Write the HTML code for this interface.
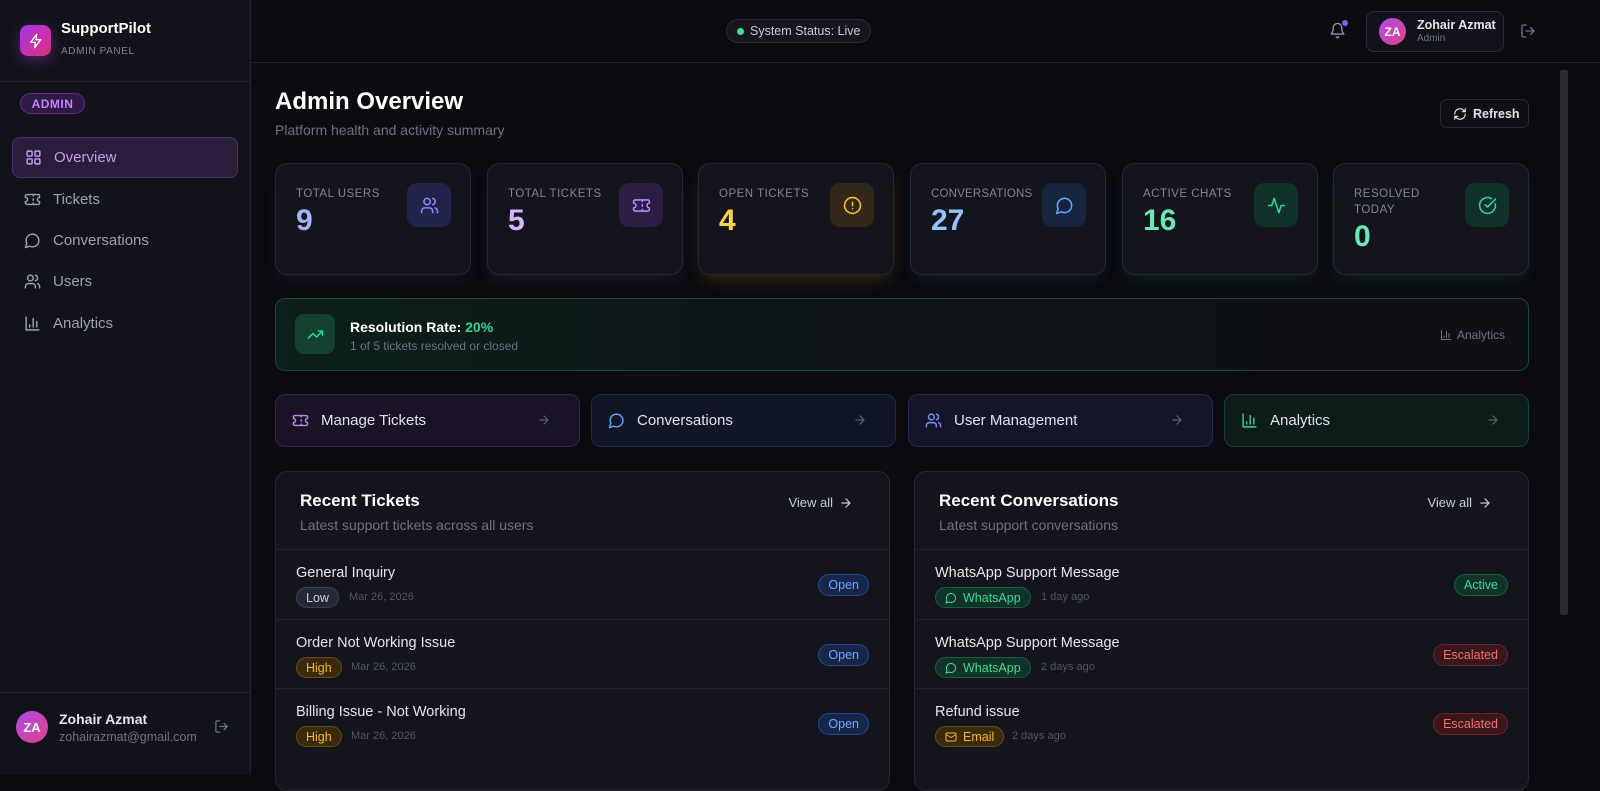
<!DOCTYPE html>
<html><head><meta charset="utf-8"><style>
*{box-sizing:border-box;margin:0;padding:0}
html,body{background:#0b0b10}
body{width:1600px;height:775px;overflow:hidden;font-family:"Liberation Sans",sans-serif;color:#e5e7eb;position:relative}
.sb{position:absolute;left:0;top:0;width:251px;height:775px;background:#12131a;border-right:1px solid #23242e}
.abs{position:absolute}
svg{fill:none;stroke:currentColor;stroke-width:2;stroke-linecap:round;stroke-linejoin:round}
.nav{position:absolute;left:12px;width:226px;height:41px;display:flex;align-items:center;padding-left:12px;font-size:15px;color:#9aa3b5}
.nav svg{width:17px;height:17px;margin-right:12px}
.card{position:absolute;top:163px;width:196px;height:112px;background:#13141c;border:1px solid #262733;border-radius:12px}
.card .l{position:absolute;left:20px;top:22px;font-size:11.5px;letter-spacing:.5px;color:#7d8597;line-height:16px;width:105px}
.card .n{position:absolute;left:20px;top:40px;font-size:30px;font-weight:bold}
.card .ic{position:absolute;left:131px;top:19px;width:44px;height:44px;border-radius:10px;display:flex;align-items:center;justify-content:center}
.card .ic svg{width:19px;height:19px}
.ql{position:absolute;top:394px;width:305px;height:53px;border-radius:10px;display:flex;align-items:center;padding-left:16px;font-size:15px;color:#e0e3ea}
.ql svg{width:17px;height:17px;margin-right:12px}
.ql .ar{position:absolute;right:16px;top:18px;width:14px;height:14px;color:#5b6274}
.pn{position:absolute;top:471px;width:615px;height:320px;background:#13141c;border:1px solid #262733;border-radius:12px;overflow:hidden}
.pn h3{position:absolute;left:24px;top:19px;font-size:17px;color:#fff}
.pn .sub{position:absolute;left:24px;top:45px;font-size:14px;color:#6b7385}
.pn .va{position:absolute;right:36px;top:23px;font-size:13px;color:#c8ccd6;display:flex;align-items:center}
.pn .va svg{width:14px;height:14px;margin-left:6px}
.row{position:absolute;left:0;right:0;height:70px;border-top:1px solid #22232d}
.row .t{position:absolute;left:20px;top:15px;font-size:14.5px;color:#e5e7eb}
.row .b{position:absolute;left:20px;top:37px;height:21px;border-radius:11px;font-size:12.5px;display:flex;align-items:center;padding:0 9px}
.row .d{position:absolute;top:41px;font-size:11px;color:#4f5668}
.row .s{position:absolute;right:20px;top:24px;height:22px;border-radius:11px;font-size:12.5px;padding:0 9px;display:flex;align-items:center}
.open{background:#15264a;border:1px solid #244a8a;color:#6ea8ff}
.low{background:#232836;border:1px solid #3a4152;color:#c9ced8}
.high{background:#3a2a0c;border:1px solid #6a4a10;color:#f5b82a}
.wa{background:#0f3328;border:1px solid #1b5a45;color:#3ddc97}
.em{background:#3a2a0c;border:1px solid #6a4a10;color:#f5b82a}
.act{background:#0f3328;border:1px solid #1b5a45;color:#3ddc97}
.esc{background:#3a1519;border:1px solid #6a252c;color:#f07178}
.b svg{width:12px;height:12px;margin-right:6px}
</style></head><body>
<div class="sb">
 <div class="abs" style="left:20px;top:25px;width:31px;height:31px;border-radius:8px;background:linear-gradient(135deg,#a534e8,#e0307a);box-shadow:0 4px 14px rgba(170,50,220,.4);display:flex;align-items:center;justify-content:center;color:#fff"><svg width="16" height="16" viewBox="0 0 24 24"><path d="M13 2 4 14h7l-1 8 9-12h-7z"/></svg></div>
 <div class="abs" style="left:61px;top:20px;font-size:15px;font-weight:bold;color:#fff">SupportPilot</div>
 <div class="abs" style="left:61px;top:46px;font-size:10px;letter-spacing:.6px;color:#7d8597">ADMIN PANEL</div>
 <div class="abs" style="left:0;top:81px;width:250px;border-top:1px solid #23242e"></div>
 <div class="abs" style="left:20px;top:93px;width:65px;height:21px;border-radius:11px;background:#2e1a45;border:1px solid #5a3088;color:#c084fc;font-size:12px;font-weight:bold;display:flex;align-items:center;justify-content:center;letter-spacing:.5px">ADMIN</div>
 <div class="nav" style="top:137px;background:#2a1d3c;border:1px solid #4a2f6a;border-radius:8px;color:#c99af5"><svg viewBox="0 0 24 24"><rect x="3" y="3" width="7" height="7" rx="1"/><rect x="14" y="3" width="7" height="7" rx="1"/><rect x="14" y="14" width="7" height="7" rx="1"/><rect x="3" y="14" width="7" height="7" rx="1"/></svg>Overview</div>
 <div class="nav" style="top:179px"><svg viewBox="0 0 24 24"><path d="M2 9a3 3 0 0 1 0 6v2a2 2 0 0 0 2 2h16a2 2 0 0 0 2-2v-2a3 3 0 0 1 0-6V7a2 2 0 0 0-2-2H4a2 2 0 0 0-2 2Z"/><path d="M13 5v2M13 17v2M13 11v2"/></svg>Tickets</div>
 <div class="nav" style="top:220px"><svg viewBox="0 0 24 24"><path d="M7.9 20A9 9 0 1 0 4 16.1L2 22Z"/></svg>Conversations</div>
 <div class="nav" style="top:261px"><svg viewBox="0 0 24 24"><path d="M16 21v-2a4 4 0 0 0-4-4H6a4 4 0 0 0-4 4v2"/><circle cx="9" cy="7" r="4"/><path d="M22 21v-2a4 4 0 0 0-3-3.9M16 3.1a4 4 0 0 1 0 7.8"/></svg>Users</div>
 <div class="nav" style="top:303px"><svg viewBox="0 0 24 24"><path d="M3 3v18h18M18 17V9M13 17V5M8 17v-3"/></svg>Analytics</div>
 <div class="abs" style="left:0;top:692px;width:250px;border-top:1px solid #23242e"></div>
 <div class="abs" style="left:16px;top:711px;width:32px;height:32px;border-radius:50%;background:linear-gradient(135deg,#b04be8,#e0408a);color:#fff;font-size:13px;font-weight:bold;display:flex;align-items:center;justify-content:center">ZA</div>
 <div class="abs" style="left:59px;top:711px;font-size:14px;font-weight:bold;color:#e5e7eb">Zohair Azmat</div>
 <div class="abs" style="left:59px;top:730px;font-size:12.5px;color:#6b7385">zohairazmat@gmail.com</div>
 <svg class="abs" style="left:214px;top:719px;color:#6b7385" width="15" height="15" viewBox="0 0 24 24"><path d="M9 21H5a2 2 0 0 1-2-2V5a2 2 0 0 1 2-2h4M16 17l5-5-5-5M21 12H9"/></svg>
</div>
<div class="abs" style="left:251px;top:62px;width:1349px;border-top:1px solid #23242e"></div>
<div class="abs" style="left:726px;top:19px;width:145px;height:24px;border-radius:12px;background:#15161e;border:1px solid #2a2b36;font-size:12.5px;color:#c8ccd6;display:flex;align-items:center;padding-left:10px;white-space:nowrap"><span style="width:7px;height:7px;border-radius:50%;background:#3ddc97;margin-right:6px"></span>System Status: Live</div>
<svg class="abs" style="left:1329px;top:22px;color:#8a92a4" width="17" height="17" viewBox="0 0 24 24"><path d="M6 8a6 6 0 0 1 12 0c0 7 3 9 3 9H3s3-2 3-9M10.3 21a1.9 1.9 0 0 0 3.4 0"/></svg>
<div class="abs" style="left:1342px;top:20px;width:6px;height:6px;border-radius:50%;background:#6366f1"></div>
<div class="abs" style="left:1366px;top:11px;width:138px;height:41px;border-radius:8px;background:#12131a;border:1px solid #2a2b36"></div>
<div class="abs" style="left:1379px;top:18px;width:27px;height:27px;border-radius:50%;background:linear-gradient(135deg,#b04be8,#e0408a);color:#fff;font-size:12px;font-weight:bold;display:flex;align-items:center;justify-content:center">ZA</div>
<div class="abs" style="left:1417px;top:18px;font-size:12.5px;font-weight:bold;color:#e5e7eb;white-space:nowrap">Zohair Azmat</div>
<div class="abs" style="left:1417px;top:33px;font-size:10px;color:#6b7385">Admin</div>
<svg class="abs" style="left:1520px;top:23px;color:#6b7385" width="16" height="16" viewBox="0 0 24 24"><path d="M9 21H5a2 2 0 0 1-2-2V5a2 2 0 0 1 2-2h4M16 17l5-5-5-5M21 12H9"/></svg>
<div class="abs" style="left:1560px;top:70px;width:8px;height:545px;background:#2a2b33;border-radius:2px"></div>
<div class="abs" style="left:275px;top:88px;font-size:24px;font-weight:bold;color:#fff">Admin Overview</div>
<div class="abs" style="left:275px;top:122px;font-size:14px;color:#6b7385">Platform health and activity summary</div>
<div class="abs" style="left:1440px;top:99px;width:89px;height:29px;border-radius:7px;border:1px solid #2a2b36;background:#0f1016;font-size:12.5px;font-weight:bold;color:#e0e3ea;display:flex;align-items:center;padding-left:12px;white-space:nowrap"><svg width="14" height="14" viewBox="0 0 24 24" style="margin-right:6px"><path d="M3 12a9 9 0 0 1 15-6.7L21 8M21 3v5h-5M21 12a9 9 0 0 1-15 6.7L3 16M8 16H3v5"/></svg>Refresh</div>
<div class="card" style="left:275px;box-shadow:0 8px 18px -6px rgba(99,102,241,.18)"><div class="l">TOTAL USERS</div><div class="n" style="color:#a5b4fc">9</div><div class="ic" style="background:#22234a;color:#818cf8"><svg viewBox="0 0 24 24"><path d="M16 21v-2a4 4 0 0 0-4-4H6a4 4 0 0 0-4 4v2"/><circle cx="9" cy="7" r="4"/><path d="M22 21v-2a4 4 0 0 0-3-3.9M16 3.1a4 4 0 0 1 0 7.8"/></svg></div></div>
<div class="card" style="left:487px;box-shadow:0 8px 18px -6px rgba(168,85,247,.18)"><div class="l" style="width:110px">TOTAL TICKETS</div><div class="n" style="color:#d8b4fe">5</div><div class="ic" style="background:#2c1e42;color:#c084fc"><svg viewBox="0 0 24 24"><path d="M2 9a3 3 0 0 1 0 6v2a2 2 0 0 0 2 2h16a2 2 0 0 0 2-2v-2a3 3 0 0 1 0-6V7a2 2 0 0 0-2-2H4a2 2 0 0 0-2 2Z"/><path d="M13 5v2M13 17v2M13 11v2"/></svg></div></div>
<div class="card" style="left:698px;box-shadow:0 8px 18px -6px rgba(245,158,11,.25)"><div class="l" style="width:110px">OPEN TICKETS</div><div class="n" style="color:#fcd34d">4</div><div class="ic" style="background:#33271a;color:#fbbf24"><svg viewBox="0 0 24 24"><circle cx="12" cy="12" r="10"/><path d="M12 8v4M12 16h.01"/></svg></div></div>
<div class="card" style="left:910px;box-shadow:0 8px 18px -6px rgba(59,130,246,.18)"><div class="l" style="letter-spacing:.2px;width:115px">CONVERSATIONS</div><div class="n" style="color:#93c5fd">27</div><div class="ic" style="background:#172440;color:#60a5fa"><svg viewBox="0 0 24 24"><path d="M7.9 20A9 9 0 1 0 4 16.1L2 22Z"/></svg></div></div>
<div class="card" style="left:1122px;box-shadow:0 8px 18px -6px rgba(16,185,129,.18)"><div class="l" style="width:110px">ACTIVE CHATS</div><div class="n" style="color:#6ee7b7">16</div><div class="ic" style="background:#12302a;color:#34d399"><svg viewBox="0 0 24 24"><path d="M22 12h-4l-3 9L9 3l-3 9H2"/></svg></div></div>
<div class="card" style="left:1333px;box-shadow:0 8px 18px -6px rgba(16,185,129,.18)"><div class="l" style="width:80px">RESOLVED TODAY</div><div class="n" style="color:#6ee7b7;top:56px">0</div><div class="ic" style="background:#12302a;color:#34d399"><svg viewBox="0 0 24 24"><path d="M21.8 10A10 10 0 1 1 17 3.3"/><path d="m9 11 3 3L22 4"/></svg></div></div>
<div class="abs" style="left:275px;top:298px;width:1254px;height:73px;border-radius:10px;border:1px solid #164a37;background:linear-gradient(90deg,#0d1f1a,#0e1115 60%,#0e1014)"></div>
<div class="abs" style="left:295px;top:314px;width:40px;height:40px;border-radius:9px;background:#14402f;color:#34d399;display:flex;align-items:center;justify-content:center"><svg width="17" height="17" viewBox="0 0 24 24"><path d="m22 7-8.5 8.5-5-5L2 17M16 7h6v6"/></svg></div>
<div class="abs" style="left:350px;top:319px;font-size:14px;font-weight:bold;color:#fff">Resolution Rate: <span style="color:#34d399">20%</span></div>
<div class="abs" style="left:350px;top:339px;font-size:12px;color:#6b7385">1 of 5 tickets resolved or closed</div>
<div class="abs" style="left:1440px;top:328px;font-size:12px;color:#6b7385;display:flex;align-items:center"><svg width="12" height="12" viewBox="0 0 24 24" style="margin-right:5px"><path d="M3 3v18h18M18 17V9M13 17V5M8 17v-3"/></svg>Analytics</div>
<div class="ql" style="left:275px;background:#1a1326;border:1px solid #3a2350"><svg viewBox="0 0 24 24" style="color:#c084fc"><path d="M2 9a3 3 0 0 1 0 6v2a2 2 0 0 0 2 2h16a2 2 0 0 0 2-2v-2a3 3 0 0 1 0-6V7a2 2 0 0 0-2-2H4a2 2 0 0 0-2 2Z"/><path d="M13 5v2M13 17v2M13 11v2"/></svg>Manage Tickets<svg class="ar" viewBox="0 0 24 24"><path d="M5 12h14M12 5l7 7-7 7"/></svg></div>
<div class="ql" style="left:591px;background:#0f1626;border:1px solid #1c2d4c"><svg viewBox="0 0 24 24" style="color:#60a5fa"><path d="M7.9 20A9 9 0 1 0 4 16.1L2 22Z"/></svg>Conversations<svg class="ar" viewBox="0 0 24 24"><path d="M5 12h14M12 5l7 7-7 7"/></svg></div>
<div class="ql" style="left:908px;background:#13152a;border:1px solid #252a4c"><svg viewBox="0 0 24 24" style="color:#818cf8"><path d="M16 21v-2a4 4 0 0 0-4-4H6a4 4 0 0 0-4 4v2"/><circle cx="9" cy="7" r="4"/><path d="M22 21v-2a4 4 0 0 0-3-3.9M16 3.1a4 4 0 0 1 0 7.8"/></svg>User Management<svg class="ar" viewBox="0 0 24 24"><path d="M5 12h14M12 5l7 7-7 7"/></svg></div>
<div class="ql" style="left:1224px;background:#0d1c18;border:1px solid #174035"><svg viewBox="0 0 24 24" style="color:#34d399"><path d="M3 3v18h18M18 17V9M13 17V5M8 17v-3"/></svg>Analytics<svg class="ar" viewBox="0 0 24 24"><path d="M5 12h14M12 5l7 7-7 7"/></svg></div>
<div class="pn" style="left:275px">
 <h3>Recent Tickets</h3><div class="sub">Latest support tickets across all users</div>
 <div class="va">View all<svg viewBox="0 0 24 24"><path d="M5 12h14M12 5l7 7-7 7"/></svg></div>
 <div class="row" style="top:77px"><div class="t">General Inquiry</div><div class="b low">Low</div><div class="d" style="left:73px">Mar 26, 2026</div><div class="s open">Open</div></div>
 <div class="row" style="top:147px"><div class="t">Order Not Working Issue</div><div class="b high">High</div><div class="d" style="left:75px">Mar 26, 2026</div><div class="s open">Open</div></div>
 <div class="row" style="top:216px"><div class="t">Billing Issue - Not Working</div><div class="b high">High</div><div class="d" style="left:75px">Mar 26, 2026</div><div class="s open">Open</div></div>
</div>
<div class="pn" style="left:914px">
 <h3>Recent Conversations</h3><div class="sub">Latest support conversations</div>
 <div class="va">View all<svg viewBox="0 0 24 24"><path d="M5 12h14M12 5l7 7-7 7"/></svg></div>
 <div class="row" style="top:77px"><div class="t">WhatsApp Support Message</div><div class="b wa"><svg viewBox="0 0 24 24"><path d="M7.9 20A9 9 0 1 0 4 16.1L2 22Z"/></svg>WhatsApp</div><div class="d" style="left:126px">1 day ago</div><div class="s act">Active</div></div>
 <div class="row" style="top:147px"><div class="t">WhatsApp Support Message</div><div class="b wa"><svg viewBox="0 0 24 24"><path d="M7.9 20A9 9 0 1 0 4 16.1L2 22Z"/></svg>WhatsApp</div><div class="d" style="left:126px">2 days ago</div><div class="s esc">Escalated</div></div>
 <div class="row" style="top:216px"><div class="t">Refund issue</div><div class="b em"><svg viewBox="0 0 24 24"><rect x="2" y="4" width="20" height="16" rx="2"/><path d="m22 7-10 6L2 7"/></svg>Email</div><div class="d" style="left:97px">2 days ago</div><div class="s esc">Escalated</div></div>
</div>
</body></html>
